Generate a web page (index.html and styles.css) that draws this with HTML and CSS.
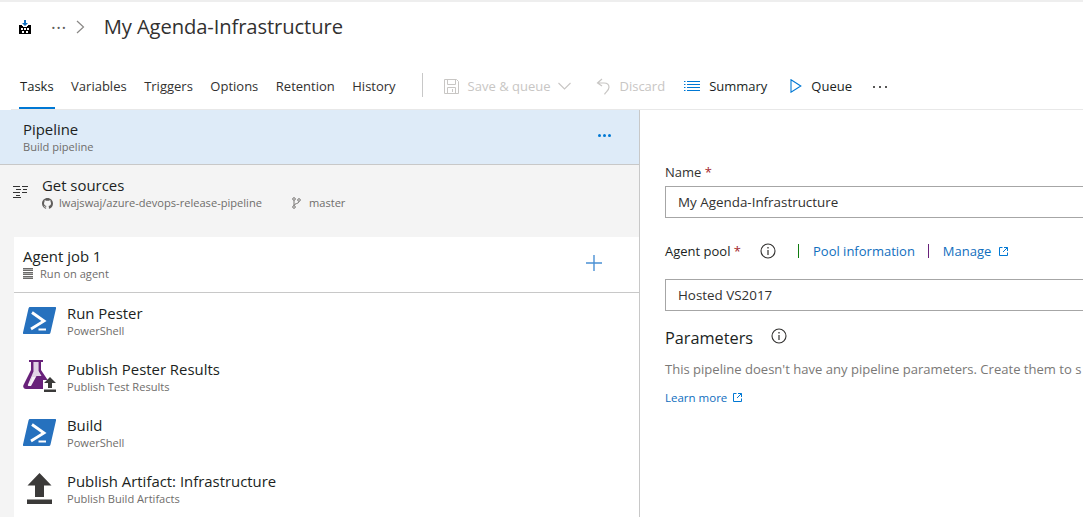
FILE: index.html
```html
<!DOCTYPE html>
<html lang="en">
<head>
  <meta charset="UTF-8" />
  <title>My Agenda-Infrastructure</title>
  <link rel="stylesheet" href="styles.css">
</head>
<body>

  <header class="title-bar">
    <svg class="logo" width="12" height="14" viewBox="0 0 12 14">
      <path fill="#106ebe" d="M5 0h2v3h2L6 6 3 3h2z"/>
      <path fill="#000" d="M0 5h3v1h1v1h4V6h1V5h3v9H0z"/>
      <path fill="#fff" d="M2 8h2v2H2zM5 8h2v2H5zM8 8h2v2H8zM3 11h2v2H3zM7 11h2v2H7z"/>
    </svg>
    <span class="crumb-dots">&middot;&middot;&middot;</span>
    <svg class="crumb-sep" width="9" height="14" viewBox="0 0 9 14"><path d="M1 1l6.500 6L1 13" fill="none" stroke="#8a8886" stroke-width="1.200"/></svg>
    <h1>My Agenda-Infrastructure</h1>
  </header>

  <nav class="toolbar">
    <a class="tab active" href="#">Tasks</a>
    <a class="tab" href="#">Variables</a>
    <a class="tab" href="#">Triggers</a>
    <a class="tab" href="#">Options</a>
    <a class="tab" href="#">Retention</a>
    <a class="tab" href="#">History</a>
    <span class="divider"></span>
    <span class="cmd disabled save">
      <svg width="15" height="15" viewBox="0 0 15 15"><path d="M.5.500h12l2 2v12H.500zM3.500.500v5h8v-5M3.500 14.500v-6h8v6M8.500 10v3" fill="none" stroke="#c8c6c4"/></svg>
      Save &amp; queue
      <svg class="chev" width="13" height="8" viewBox="0 0 13 8"><path d="M.5 1l6 6 6-6" fill="none" stroke="#c8c6c4" stroke-width="1.100"/></svg>
    </span>
    <span class="cmd disabled discard">
      <svg width="14" height="17" viewBox="0 0 14 17"><path d="M6 1L1.500 5 6 8M2 5h6c3 0 5 1.800 5 4.300 0 2.700-2.500 4.200-4.500 7" fill="none" stroke="#c8c6c4" stroke-width="1.200"/></svg>
      Discard
    </span>
    <span class="cmd summary">
      <svg width="16" height="12" viewBox="0 0 16 12"><path d="M0 1.500h1.500M3 1.500h13M0 4.500h1.500M3 4.500h13M0 7.500h1.500M3 7.500h13M0 10.500h1.500M3 10.500h13" stroke="#0078d4"/></svg>
      Summary
    </span>
    <span class="cmd queue">
      <svg width="12" height="14" viewBox="0 0 12 14"><path d="M1 .800L10.800 7 1 13.200z" fill="none" stroke="#0078d4" stroke-width="1.100"/></svg>
      Queue
    </span>
    <span class="more-dots">
      <i></i><i></i><i></i>
    </span>
  </nav>

  <main class="editor">
    <section class="left-panel">
      <div class="pipeline-row">
        <div>
          <div class="row-title">Pipeline</div>
          <div class="row-sub">Build pipeline</div>
        </div>
        <span class="blue-dots"><i></i><i></i><i></i></span>
      </div>

      <div class="sources-row">
        <svg class="sources-icon" width="15" height="14" viewBox="0 0 15 14"><path d="M0 1.500h7M9 1.500h6M3 4.500h5M10 4.500h4M0 7.500h7M9 7.500h5M0 12.500h8M3 10.500h4" stroke="#333" stroke-width="1"/></svg>
        <div>
          <div class="row-title">Get sources</div>
          <div class="row-sub source-meta">
            <svg class="github" width="11" height="11" viewBox="0 0 16 16"><path fill="#605e5c" d="M8 0C3.580 0 0 3.580 0 8c0 3.540 2.290 6.530 5.470 7.590.4.070.55-.17.55-.38v-1.490c-2.010.37-2.530-.49-2.690-.94-.09-.23-.48-.94-.82-1.130-.28-.15-.68-.52-.01-.53.630-.01 1.080.58 1.230.82.720 1.210 1.870.87 2.330.66.070-.52.280-.87.510-1.070-1.780-.2-3.640-.89-3.640-3.950 0-.87.310-1.590.820-2.150-.08-.2-.36-1.020.08-2.120 0 0 .67-.21 2.200.82a7.400 7.400 0 0 1 4 0c1.530-1.040 2.200-.82 2.200-.82.440 1.100.16 1.920.08 2.120.51.560.82 1.270.82 2.150 0 3.070-1.870 3.750-3.650 3.950.29.250.54.730.54 1.480v2.200c0 .21.150.46.550.38A8.010 8.010 0 0 0 16 8c0-4.420-3.580-8-8-8z"/></svg>
            <span class="repo">lwajswaj/azure-devops-release-pipeline</span>
            <svg class="branch" width="9" height="12" viewBox="0 0 9 12"><g fill="none" stroke="#797775"><circle cx="2" cy="2" r="1.300"/><circle cx="2" cy="10" r="1.300"/><circle cx="7" cy="3" r="1.300"/><path d="M2 3.500v5M7 4.500C7 7 2.500 6 2 8.500"/></g></svg>
            <span>master</span>
          </div>
        </div>
      </div>

      <div class="job-list">
        <div class="job-row">
          <div>
            <div class="row-title">Agent job 1</div>
            <div class="row-sub agent-meta">
              <svg width="10" height="11" viewBox="0 0 10 11"><path fill="#6b6a69" d="M0 0h10v3H0zM0 4h10v3H0zM0 8h10v3H0z"/><path stroke="#ddd" d="M0 1.500h10M0 5.500h10M0 9.500h10" stroke-width=".6"/></svg>
              Run on agent
            </div>
          </div>
          <svg class="plus" width="16" height="16" viewBox="0 0 16 16"><path d="M8 0v16M0 8h16" stroke="#4a90d4" stroke-width="1.400"/></svg>
        </div>

        <div class="task-row">
          <span class="task-icon"><svg width="33" height="27" viewBox="0 0 33 27"><use href="#ps"/></svg></span>
          <div>
            <div class="row-title">Run Pester</div>
            <div class="row-sub">PowerShell</div>
          </div>
        </div>

        <div class="task-row">
          <span class="task-icon">
            <svg width="33" height="33" viewBox="0 0 33 33">
              <path fill="#68217a" d="M6 0h14v2h-2v8l8 12-4 2-2 5H3c-2 0-3.500-2-2.500-4L8 10V2H6z"/>
              <path fill="#fff" d="M10.500 2h5v9l3 5h-5L8 26H6c-1 0-1.500-.8-1-1.600l5.500-13z" opacity=".95"/>
              <path fill="#68217a" d="M11 2h4v9l4 6H9.500l-3 7 3.500-13z" opacity=".15"/>
              <path fill="#fff" d="M20 20h13v13H20z"/>
              <path fill="#3b3a39" d="M27 17l6 6h-4v5h-4v-5h-4zM21 29.500h12V32H21z"/>
            </svg>
          </span>
          <div>
            <div class="row-title">Publish Pester Results</div>
            <div class="row-sub">Publish Test Results</div>
          </div>
        </div>

        <div class="task-row">
          <span class="task-icon"><svg width="33" height="27" viewBox="0 0 33 27"><use href="#ps"/></svg></span>
          <div>
            <div class="row-title">Build</div>
            <div class="row-sub">PowerShell</div>
          </div>
        </div>

        <div class="task-row">
          <span class="task-icon">
            <svg width="33" height="31" viewBox="0 0 33 31"><path fill="#3b3a39" d="M16.500 0L28.500 12.500H21V24h-9V12.500H4.500zM4 26.500h25V31H4z"/></svg>
          </span>
          <div>
            <div class="row-title">Publish Artifact: Infrastructure</div>
            <div class="row-sub">Publish Build Artifacts</div>
          </div>
        </div>
      </div>
    </section>

    <section class="right-panel">
      <label class="field-label name-label"><span>Name <b>*</b></span></label>
      <div class="text-box">My Agenda-Infrastructure</div>

      <div class="field-label pool-label">
        <span class="pool-name">Agent pool <b>*</b></span>
        <svg class="info" width="16" height="16" viewBox="0 0 16 16"><use href="#info"/></svg>
        <span class="bar"></span>
        <a href="#">Pool information</a>
        <span class="bar purple"></span>
        <a href="#">Manage</a>
        <svg class="ext" width="9" height="9" viewBox="0 0 9 9"><use href="#ext"/></svg>
      </div>
      <div class="text-box">Hosted VS2017</div>

      <h2 class="params">Parameters
        <svg class="info" width="16" height="16" viewBox="0 0 16 16"><use href="#info"/></svg>
      </h2>
      <p class="params-text">This pipeline doesn't have any pipeline parameters. Create them to s</p>
      <a class="learn" href="#">Learn more<svg class="ext" width="9" height="9" viewBox="0 0 9 9"><use href="#ext"/></svg></a>
    </section>
  </main>

  <!-- icones reutilisees -->
  <svg class="defs" width="0" height="0">
    <defs>
      <g id="ps">
        <path fill="#2671be" d="M7 0h25c1 0 1.300.6 1 1.500L27.500 25.500c-.2 1-1 1.500-2 1.500H1c-1 0-1.200-.6-1-1.500L5.500 1.500C5.700.6 6.200 0 7 0z"/>
        <path d="M9 5.500L21 14 8 22" fill="none" stroke="#fff" stroke-width="2.800"/>
        <path d="M15.500 22.500h7.500" stroke="#fff" stroke-width="2"/>
      </g>
      <g id="info" fill="none" stroke="#323130">
        <circle cx="8" cy="8" r="7" stroke-width="1.100"/>
        <path d="M8 7v5" stroke-width="1.200"/>
        <path d="M8 4v1.500" stroke-width="1.300"/>
      </g>
      <g id="ext" fill="none" stroke="#0078d4">
        <path d="M3.500.500H.500v8h8v-3"/>
        <path d="M5 .500h3.500V4M8.500.500L4 5"/>
      </g>
    </defs>
  </svg>

</body>
</html>
```

FILE: styles.css
```css
html, body {
  height: 517px;
  overflow: hidden;
}
body {
  font-family: "Open Sans", Arial, sans-serif;
  margin: 0;
  background: white;
  color: #323130;
  font-size: 13px;
}
a {
  text-decoration: none;
}
.defs {
  position: absolute;
}

/* Titre */
.title-bar {
  display: flex;
  align-items: center;
  height: 53px;
  box-sizing: border-box;
  padding-left: 19px;
  border-top: 2px solid #eee;
}
.logo {
  margin-top: -2px;
}
.crumb-dots {
  margin-left: 20px;
  font-size: 18px;
  letter-spacing: 0.5px;
  color: #605e5c;
  margin-top: -2px;
}
.crumb-sep {
  margin-left: 9px;
  margin-top: -1px;
}
h1 {
  font-size: 20.2px;
  font-weight: 400;
  margin: -3px 0 0 19px;
  letter-spacing: -0.1px;
}

/* Onglets + commandes */
.toolbar {
  display: flex;
  align-items: center;
  height: 57px;
  box-sizing: border-box;
  margin-left: 11px;
  padding: 24px 0 14px 9px;
  border-bottom: 1px solid #e8e8e8;
}
.tab {
  color: #323130;
  font-size: 13px;
  line-height: 18px;
  margin-right: 17.5px;
  position: relative;
}
.tab.active {
  color: #201f1e;
}
.tab.active::after {
  content: "";
  position: absolute;
  left: -1px;
  right: -1px;
  bottom: -14px;
  height: 2px;
  background: #0078d4;
}
.divider {
  flex-shrink: 0;
  width: 1px;
  height: 24px;
  background: #c8c8c8;
  margin: -2px 21px 0 8.5px;
}
.cmd {
  display: flex;
  align-items: center;
  color: #201f1e;
  font-size: 13px;
}
.cmd svg {
  margin-right: 9px;
}
.cmd.disabled {
  color: #c8c6c4;
}
.cmd .chev {
  margin: 0 0 0 8px;
}
.discard {
  margin-left: 25px;
}
.summary {
  margin-left: 19px;
}
.queue {
  margin-left: 23px;
}
.more-dots, .blue-dots {
  display: flex;
  gap: 3px;
}
.more-dots {
  margin: 2px 0 0 21px;
}
.more-dots i {
  width: 2px;
  height: 2px;
  border-radius: 50%;
  background: #201f1e;
  margin-right: 1px;
}

/* Editeur */
.editor {
  display: flex;
  height: 407px;
}
.left-panel {
  width: 640px;
  box-sizing: border-box;
  border-right: 1px solid #c8c8c8;
  background: #f4f4f4;
  flex-shrink: 0;
}
.row-title {
  font-size: 14.9px;
  line-height: 20px;
  margin: -1px 0 1px;
  color: #201f1e;
}
.row-sub {
  font-size: 11.1px;
  line-height: 14px;
  color: #6f6d6b;
}
.pipeline-row {
  display: flex;
  justify-content: space-between;
  align-items: center;
  height: 55px;
  box-sizing: border-box;
  padding: 0 28px 0 23px;
  background: #deebf8;
  border-bottom: 1px solid #c8c8c8;
}
.blue-dots {
  gap: 2px;
  margin-top: -3px;
}
.blue-dots i {
  width: 3px;
  height: 3px;
  border-radius: 50%;
  background: #0078d4;
}
.sources-row {
  display: flex;
  height: 72px;
  box-sizing: border-box;
  padding: 11px 0 0 13px;
}
.sources-icon {
  margin: 9px 14px 0 0;
}
.source-meta {
  display: flex;
  align-items: center;
}
.github {
  margin-right: 6px;
}
.branch {
  margin: 0 8px 0 30px;
}
.job-list {
  margin-left: 14px;
  background: white;
}
.job-row {
  display: flex;
  justify-content: space-between;
  align-items: center;
  height: 56px;
  box-sizing: border-box;
  padding: 0 37px 2px 9px;
  border-bottom: 1px solid #c8c8c8;
}
.plus {
  margin-top: -1px;
}
.agent-meta {
  display: flex;
  align-items: center;
  gap: 7px;
}
.task-row {
  display: flex;
  align-items: center;
  height: 56px;
  padding-left: 9px;
}
.task-icon {
  display: flex;
  justify-content: center;
  width: 33px;
  margin: -2px 11px 0 0;
}

/* Panneau de droite */
.right-panel {
  flex: 1;
  min-width: 0;
  overflow: hidden;
  padding: 53px 0 0 25px;
}
.field-label {
  display: flex;
  align-items: center;
  font-size: 13px;
  line-height: 18px;
  color: #323130;
}
.field-label b {
  color: #a4262c;
  font-weight: 400;
}
.text-box {
  width: 600px;
  height: 32px;
  box-sizing: border-box;
  margin-top: 5px;
  padding-left: 12px;
  border: 1px solid #a6a6a6;
  line-height: 30px;
  font-size: 13.4px;
  color: #323130;
}
.pool-label {
  margin-top: 23px;
  height: 20px;
  color: #201f1e;
}
.pool-label + .text-box {
  margin-top: 18px;
}
.pool-name {
  margin-right: 19px;
}
.pool-label a, .learn {
  color: #106ebe;
}
.bar {
  width: 1px;
  height: 14px;
  margin: 0 14px 0 22px;
  background: #107c10;
}
.bar.purple {
  background: #68217a;
  margin-left: 13px;
}
.ext {
  margin-left: 8px;
}
.learn .ext {
  margin-left: 6px;
}
.params {
  display: flex;
  align-items: center;
  font-size: 16.3px;
  font-weight: 400;
  color: #201f1e;
  margin: 15px 0 0;
  line-height: 24px;
}
.params .info {
  margin: -4px 0 0 18px;
}
.params-text {
  margin: 10px 0 0;
  font-size: 13.05px;
  line-height: 18px;
  color: #7a7876;
  white-space: nowrap;
}
.learn {
  display: block;
  margin-top: 12px;
  font-size: 11.5px;
  line-height: 16px;
}
```
